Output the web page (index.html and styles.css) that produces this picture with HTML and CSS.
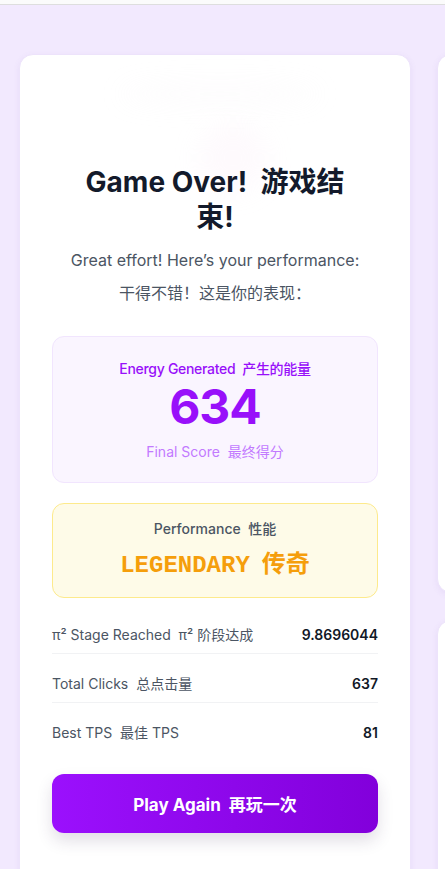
FILE: index.html
```html
<!DOCTYPE html>
<html lang="zh-CN">
<head>
<meta charset="UTF-8" />
<meta name="viewport" content="width=device-width, initial-scale=1" />
<title>Game Over 游戏结束</title>
<link rel="stylesheet" href="styles.css">
</head>
<body>
<div class="topbar"></div>
<main class="board">
  <section class="card result">
    <!-- faint glow behind the title -->
    <div class="glow glow-a"></div>
    <div class="glow glow-b"></div>

    <h2 class="title">Game Over!&nbsp; 游戏结束!</h2>
    <p class="subtitle">Great effort! Here’s your performance:</p>
    <p class="subtitle">干得不错！这是你的表现：</p>

    <div class="score-box">
      <div class="score-label">Energy Generated&nbsp; 产生的能量</div>
      <div class="score-value">634</div>
      <div class="score-note">Final Score&nbsp; 最终得分</div>
    </div>

    <div class="rank-box">
      <div class="rank-label">Performance&nbsp; 性能</div>
      <div class="rank-value"><span class="rank-en">LEGENDARY</span><span class="rank-zh">传奇</span></div>
    </div>

    <div class="stats">
      <div class="stat-row">
        <span class="stat-name">π² Stage Reached&nbsp; π² 阶段达成</span>
        <span class="stat-num">9.8696044</span>
      </div>
      <div class="stat-row">
        <span class="stat-name">Total Clicks&nbsp; 总点击量</span>
        <span class="stat-num">637</span>
      </div>
      <div class="stat-row">
        <span class="stat-name">Best TPS&nbsp; 最佳 TPS</span>
        <span class="stat-num">81</span>
      </div>
    </div>

    <button class="play-btn" type="button">Play Again&nbsp; 再玩一次</button>
  </section>

  <div class="side">
    <section class="card side-top"></section>
    <section class="card side-bottom"></section>
  </div>
</main>
</body>
</html>
```

FILE: styles.css
```css
body {
  margin: 0;
  font-family: Inter, "Noto Sans CJK SC", sans-serif;
  background: #f2e9fe;
  height: 869px;
  overflow: hidden;
}
.topbar {
  height: 4px;
  background: #fbfbfb;
  border-bottom: 1px solid #dedede;
}
.board {
  display: flex;
  gap: 26px;
  padding: 49px 0 0 19px;
  overflow: hidden;
}
.card {
  background: #fff;
  border: 1px solid #ede3fb;
  border-radius: 14px;
  box-shadow: 0 2px 6px rgba(120, 80, 180, 0.08);
  box-sizing: border-box;
}
.result {
  position: relative;
  flex-shrink: 0;
  width: 392px;
  padding: 110px 32px 40px;
  display: flex;
  flex-direction: column;
  overflow: hidden;
}
.glow {
  position: absolute;
  border-radius: 50%;
  filter: blur(12px);
  pointer-events: none;
}
.glow-a {
  left: 100px;
  top: 28px;
  width: 200px;
  height: 22px;
  background: rgba(235, 232, 240, 0.12);
}
.glow-b {
  left: 178px;
  top: 68px;
  width: 70px;
  height: 70px;
  background: rgba(245, 220, 238, 0.14);
}
.title {
  position: relative;
  margin: 0 auto 13px;
  width: 280px;
  font-size: 28px;
  line-height: 35px;
  font-weight: 700;
  color: #131a2b;
  text-align: center;
}
.subtitle {
  position: relative;
  margin: 0 0 9px;
  font-size: 16px;
  line-height: 24px;
  color: #4b5563;
  text-align: center;
}
.score-box {
  margin-top: 22px;
  padding: 22px 0 20px;
  background: #faf5ff;
  border: 1px solid #f1e5fe;
  border-radius: 12px;
  text-align: center;
}
.score-label {
  font-size: 14px;
  line-height: 20px;
  font-weight: 500;
  letter-spacing: -0.3px;
  color: #9810fa;
}
.score-value {
  margin-top: 4px;
  font-size: 48px;
  line-height: 48px;
  font-weight: 700;
  letter-spacing: -1px;
  color: #9810fa;
}
.score-note {
  margin-top: 11px;
  font-size: 14px;
  line-height: 20px;
  color: #c27aff;
}
.rank-box {
  margin-top: 20px;
  padding: 15px 0 15px;
  background: #fefbe8;
  border: 1px solid #fdea8c;
  border-radius: 12px;
  text-align: center;
}
.rank-label {
  font-size: 14px;
  line-height: 20px;
  font-weight: 500;
  color: #4b5563;
}
.rank-value {
  margin-top: 7px;
  font-size: 24px;
  line-height: 32px;
  font-weight: 700;
  color: #f59e0b;
}
.rank-en {
  font-family: "Liberation Mono", monospace;
}
.rank-zh {
  margin-left: 12px;
  font-family: "Noto Sans CJK SC", sans-serif;
}
.stats {
  margin-top: 19px;
  display: flex;
  flex-direction: column;
  gap: 12px;
}
.stat-row {
  display: flex;
  justify-content: space-between;
  align-items: center;
  padding: 8px 0;
  border-bottom: 1px solid #f1f2f4;
  font-size: 14px;
  line-height: 20px;
}
.stat-row:last-child {
  border-bottom: none;
}
.stat-name {
  color: #4b5563;
}
.stat-num {
  font-weight: 600;
  color: #111827;
}
.play-btn {
  margin-top: 23px;
  height: 59px;
  border: none;
  border-radius: 12px;
  background: linear-gradient(90deg, #9b10fd, #8200db);
  box-shadow: 0 8px 16px rgba(60, 40, 90, 0.15);
  color: #fff;
  font-family: Inter, "Noto Sans CJK SC", sans-serif;
  font-size: 17px;
  font-weight: 700;
  cursor: pointer;
}
.side {
  flex-shrink: 0;
  width: 300px;
  display: flex;
  flex-direction: column;
  gap: 27px;
}
.side-top {
  height: 539px;
}
.side-bottom {
  height: 400px;
}
```
